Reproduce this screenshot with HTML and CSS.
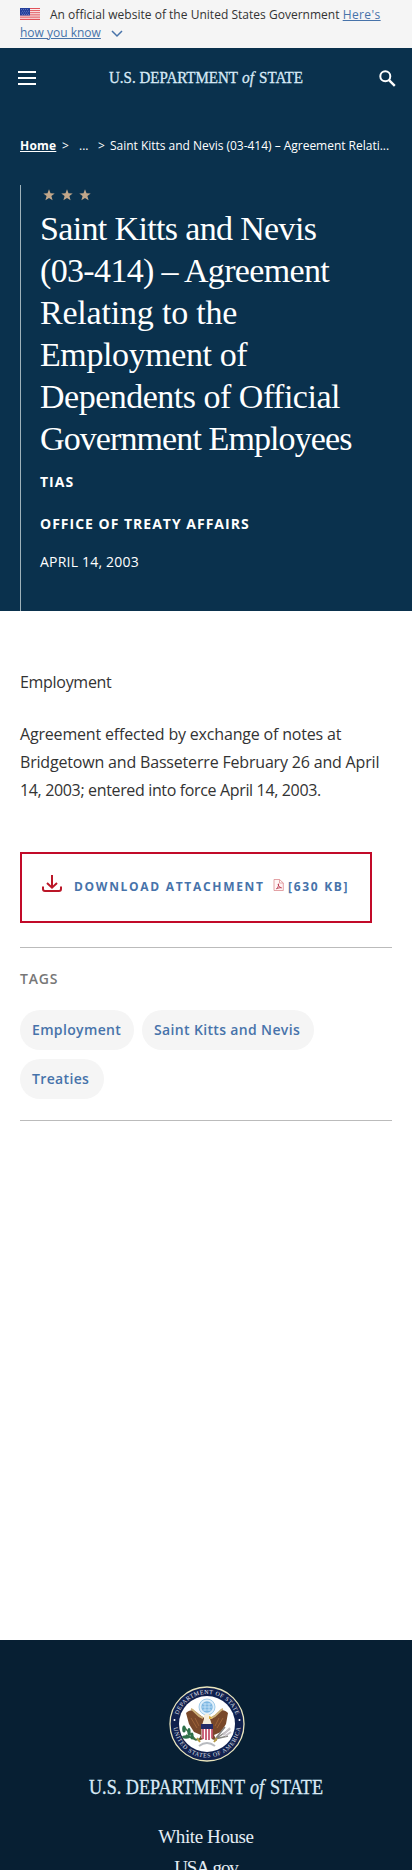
FILE: index.html
```html
<!DOCTYPE html>
<html lang="en">
<head>
<meta charset="utf-8">
<meta name="viewport" content="width=device-width">
<title>Saint Kitts and Nevis (03-414) - United States Department of State</title>
<link rel="stylesheet" href="styles.css">
</head>
<body>
<div class="banner">
  <svg class="flag" viewBox="0 0 20 12"><path fill="#fff" d="M0 0h20v12H0z"/><path stroke="#e0525a" stroke-width="1" d="M0 .5h20M0 2.4h20M0 4.3h20M0 6.2h20M0 8h20M0 9.8h20M0 11.5h20"/><path fill="#253f9b" d="M0 0h10v7.5H0z"/><path stroke="#8c9cda" stroke-width=".7" stroke-dasharray=".8 1.2" d="M1 1.5h8M2 3.3h8M1 5h8M2 6.5h8"/></svg><span class="banner-text">An official website of the United States Government</span> <a href="#"><span class="heres">Here's</span><br>how you know</a><svg class="chevron" viewBox="0 0 12 7"><path d="M1 1l5 5 5-5" fill="none" stroke="#4773aa" stroke-width="1.5"/></svg>
</div>
<header class="masthead">
  <svg class="menu" viewBox="0 0 18 14"><path d="M0 1h18M0 7h18M0 13h18" stroke="#fff" stroke-width="2"/></svg>
  <svg class="wordmark" viewBox="0 0 194 22"><text x="0" y="17" textLength="129" lengthAdjust="spacingAndGlyphs">U.S. DEPARTMENT</text><text class="of" x="133" y="17" textLength="12" lengthAdjust="spacingAndGlyphs">of</text><text x="150" y="17" textLength="44" lengthAdjust="spacingAndGlyphs">STATE</text></svg>
  <svg class="search" viewBox="0 0 17 17"><circle cx="6.3" cy="6.3" r="5" fill="none" stroke="#fff" stroke-width="2"/><path d="M9.8 9.8l6 6" stroke="#fff" stroke-width="2.4"/></svg>
</header>
<section class="hero">
  <nav class="crumbs"><a href="#">Home</a><span class="sep">&gt;</span><span class="dots">...</span><span class="sep2">&gt;</span><span class="current">Saint Kitts and Nevis (03-414) – Agreement Relati...</span></nav>
  <div class="hero-body">
    <svg class="stars" viewBox="0 0 48 12"><defs><path id="star" d="M6 .3l1.500 4 4.200.2-3.300 2.600 1.200 4.200L6 9 2.400 11.300l1.200-4.200L.3 4.500l4.200-.2z"/></defs><g fill="#c2a78a"><use href="#star"/><use href="#star" x="18"/><use href="#star" x="36"/></g></svg>
    <h1><span class="l1">Saint Kitts and Nevis</span> <span class="l2">(03-414) – Agreement</span> <span class="l3">Relating to the</span> <span class="l4">Employment of</span> <span class="l5">Dependents of Official</span> <span class="l6">Government Employees</span></h1>
    <p class="kind">TIAS</p>
    <p class="office">OFFICE OF TREATY AFFAIRS</p>
    <p class="date">APRIL 14, 2003</p>
  </div>
</section>
<main>
  <p class="subject">Employment</p>
  <p>Agreement effected by exchange of notes at Bridgetown and Basseterre February 26 and April <span class="tight">14, 2003; entered into force April 14, 2003.</span></p>
  <a class="download" href="#">
    <svg class="dl-icon" viewBox="0 0 20 18"><path d="M10 0v12.500M5 8l5 4.700L15 8M1 11.500V14q0 2 2 2h14q2 0 2-2v-2.500" fill="none" stroke="#bb1728" stroke-width="2"/></svg>
    <span class="dl-label">DOWNLOAD ATTACHMENT</span>
    <svg class="pdf" viewBox="0 0 11 13"><path d="M1 .5h5.500L10.300 4v7.500H1zM6.500.5V4h3.800" fill="#fff5f5" stroke="#dc8d91" stroke-width=".8"/><path d="M3.500 9.800c1.500-1.500 2.500-3.500 2-5-1 1 1 3.500 3 4-1.500-.3-3.500.2-5 1z" fill="none" stroke="#b8324a" stroke-width=".9"/></svg>
    <span class="dl-size">[630 KB]</span>
  </a>
  <section class="tags">
    <h2>TAGS</h2>
    <div class="tag-list"><a class="t1" href="#">Employment</a><a class="t2" href="#">Saint Kitts and Nevis</a><a class="t3" href="#">Treaties</a></div>
  </section>
</main>
<footer>
  <svg class="seal" viewBox="0 0 76 76">
    <defs>
      <path id="arcTop" d="M8 38a30 30 0 0 1 60 0"/>
      <path id="arcBottom" d="M4.500 38a33.500 33.500 0 0 0 67 0"/>
    </defs>
    <circle cx="38" cy="38" r="37" fill="#10204e" stroke="#e9e5bd" stroke-width="1.300"/>
    <circle cx="38" cy="38" r="28" fill="#fff"/>
    <g class="seal-text"><text><textPath href="#arcTop" startOffset="50%" text-anchor="middle" textLength="76">DEPARTMENT OF STATE</textPath></text>
    <text><textPath href="#arcBottom" startOffset="50%" text-anchor="middle" textLength="98">UNITED STATES OF AMERICA</textPath></text></g>
    <circle cx="5.500" cy="34" r="1" fill="#fff"/><circle cx="70.500" cy="34" r="1" fill="#fff"/>
    <circle cx="38" cy="21" r="8" fill="#e0effa" stroke="#8bc0e4" stroke-width=".8"/><circle cx="38" cy="21" r="5.700" fill="#7db7e2"/>
    <path d="M34 18h8M33 21h10M34 24h8M36 17v8M40 17v8" stroke="#d4eafa" stroke-width=".7"/>
    <path fill="#79482a" d="M36 32c-4-1-7-6-12-8 0 0-4 0-7 3l3 11 5 8 7 3-3 6 8-3h3l8 3-3-6 7-3 5-8 2-11c-3-3-6-3-6-3-5 2-8 7-12 8z"/>
    <path d="M22 23c4 1 5 7 12 9M54 23c-4 1-5 7-12 9" fill="none" stroke="#cdb17b" stroke-width="2"/>
    <path d="M22 32l6 10M26 32l4 8M54 32l-6 10M50 32l-4 8" stroke="#a66a3c" stroke-width=".8"/>
    <path fill="#f6edda" d="M35 29q3-3 6 0l3 3-3 1 2 6H33l2-6z"/><path fill="#d8a62e" d="M40 30l4 2-4 1z"/>
    <path fill="#fff" d="M32.500 38h11v14q-5.500 4-11 0z"/><path d="M34 42v11M37 42v12M40 42v12M43 42v10" stroke="#b93551" stroke-width="1.500"/><path fill="#252c67" d="M32 38h12v5H32z"/>
    <path d="M15 41l12 13 4-1M17 49l10 5" fill="none" stroke="#427044" stroke-width="1.500"/>
    <g fill="#2d714a"><ellipse cx="15" cy="43" rx="1.800" ry="3.600"/><ellipse cx="20" cy="46" rx="1.600" ry="4"/><ellipse cx="17" cy="51" rx="4" ry="1.700"/><ellipse cx="23" cy="50" rx="1.600" ry="3.500"/></g>
    <path d="M45 54l16-11M46 53l13-3M47 52l9-11" stroke="#85837f" stroke-width="1.500"/><path d="M54 49l7-7M56 50l6-4" stroke="#c8c3c8" stroke-width="2"/>
    <path d="M28 52l3 4M48 52l-3 4" stroke="#b69b43" stroke-width="2"/><path d="M30 60q8-6 16 0" fill="none" stroke="#b8bbc0" stroke-width="2"/>
  </svg>
  <svg class="wordmark-footer" viewBox="0 0 234 27"><text x="0" y="20" textLength="156" lengthAdjust="spacingAndGlyphs">U.S. DEPARTMENT</text><text class="of" x="161" y="20" textLength="14" lengthAdjust="spacingAndGlyphs">of</text><text x="181" y="20" textLength="53" lengthAdjust="spacingAndGlyphs">STATE</text></svg>
  <nav class="footer-links"><a class="wh" href="#">White House</a><a class="usa" href="#">USA.gov</a></nav>
</footer>
</body>
</html>
```
FILE: styles.css
```css
* { box-sizing: border-box; }
body { margin: 0; width: 412px; height: 1870px; overflow: hidden; background: #fff; color: #333; font-family: "Open Sans", sans-serif; }
p, h1, h2 { margin: 0; }
svg { display: block; flex: none; overflow: visible; }
.banner { height: 48px; padding: 6px 20px 0; background: #f5f5f5; font-size: 12px; line-height: 18px; white-space: nowrap; color: #333; }
.banner a { color: #4773aa; text-decoration: underline; }
.banner-text { letter-spacing: .02px; }
.heres { letter-spacing: .4px; }
.flag { display: inline-block; width: 20px; height: 12px; margin-right: 10px; vertical-align: -1px; }
.chevron { display: inline-block; width: 12px; height: 7px; margin-left: 10px; vertical-align: 0; }
.masthead { height: 60px; padding: 0 16px 0 18px; display: flex; align-items: center; justify-content: space-between; background: #0a314d; }
.menu { width: 18px; height: 14px; }
.wordmark { width: 194px; height: 22px; margin-right: 3px; margin-top: -2px; }
.wordmark text, .wordmark-footer text { font-family: "Liberation Serif", serif; fill: #d8eaf7; stroke: #d8eaf7; stroke-width: .3px; }
.wordmark text { font-size: 16.5px; }
.wordmark .of, .wordmark-footer .of { font-style: italic; }
.search { width: 17px; height: 17px; }
.hero { height: 503px; padding: 29px 20px 0; background: #0a314d; color: #fff; }
.crumbs { display: flex; height: 18px; font-size: 12px; line-height: 18px; white-space: nowrap; }
.crumbs a { width: 37px; color: #fff; font-weight: 700; letter-spacing: .2px; }
.sep { margin-left: 5px; width: 17px; }
.dots { width: 19px; }
.sep2 { width: 12px; }
.current { letter-spacing: -.02px; }
.hero-body { margin-top: 30px; height: 426px; padding: 4px 0 0 20px; border-left: 1px solid #9fb2ba; }
.stars { width: 48px; height: 12px; margin-left: 2px; }
h1 { margin-top: 7px; margin-left: -1px; font: 400 34px/42.100px "Liberation Serif", serif; }
h1 span { display: block; width: max-content; white-space: nowrap; }
.l1, .l2 { letter-spacing: -.65px; }
.l3 { letter-spacing: -.2px; }
.l4 { letter-spacing: -.4px; }
.l5 { letter-spacing: -.5px; }
.l6 { letter-spacing: -.9px; }
.kind, .office, .date { margin-left: -1px; font-size: 14px; line-height: 20px; }
.kind { margin-top: 11.600px; font-weight: 700; letter-spacing: 1px; }
.office { margin-top: 22px; font-weight: 700; letter-spacing: 1px; }
.date { margin-top: 18px; letter-spacing: .2px; }
main { height: 1029px; padding: 57px 20px 0; }
main p { font-size: 16px; line-height: 28px; letter-spacing: -.18px; margin-bottom: 24px; }
main .subject { letter-spacing: -.3px; }
.tight { letter-spacing: -.35px; }
.download { display: flex; align-items: flex-start; width: 352px; height: 71px; margin-top: 48px; padding: 21px 0 0 20px; border: 2px solid #c20a29; color: #4773aa; font-size: 12px; font-weight: 700; line-height: 24px; letter-spacing: 1.700px; text-decoration: none; white-space: nowrap; }
.dl-icon { width: 20px; height: 18px; margin-right: 12px; }
.dl-label { width: 199px; }
.pdf { width: 11px; height: 13px; margin-top: 4px; margin-right: 4px; }
.dl-size { letter-spacing: 1.700px; }
.tags { margin-top: 24px; height: 174px; padding-top: 20px; border-top: 1px solid #bbb; border-bottom: 1px solid #bbb; }
.tags h2 { font-size: 14px; line-height: 22px; font-weight: 600; letter-spacing: .8px; color: #777; }
.tag-list { display: flex; flex-wrap: wrap; gap: 9px 8px; margin-top: 20px; }
.tag-list a { height: 40px; border-radius: 20px; background: #f5f5f5; color: #4773aa; font-size: 14px; font-weight: 600; line-height: 40px; letter-spacing: .35px; padding-left: 12px; text-decoration: none; white-space: nowrap; }
.t1 { width: 114px; }
.t2 { width: 172px; }
.t3 { width: 84px; }
footer { height: 230px; padding-top: 46px; display: flex; flex-direction: column; align-items: center; background: #071f33; }
.seal { width: 76px; height: 76px; margin-left: 2px; }
.seal-text { font-family: "Liberation Serif", serif; font-size: 6px; fill: #e5e8ef; }
.wordmark-footer { width: 234px; height: 27px; margin-top: 12px; }
.wordmark-footer text { font-size: 20px; }
.footer-links { display: flex; flex-direction: column; align-items: center; margin-top: 20px; font: 400 19px/31px "Liberation Serif", serif; }
.footer-links a { color: #e4edf4; text-decoration: none; white-space: nowrap; }
.wh { letter-spacing: -.4px; }
.usa { letter-spacing: -1.100px; }
```
